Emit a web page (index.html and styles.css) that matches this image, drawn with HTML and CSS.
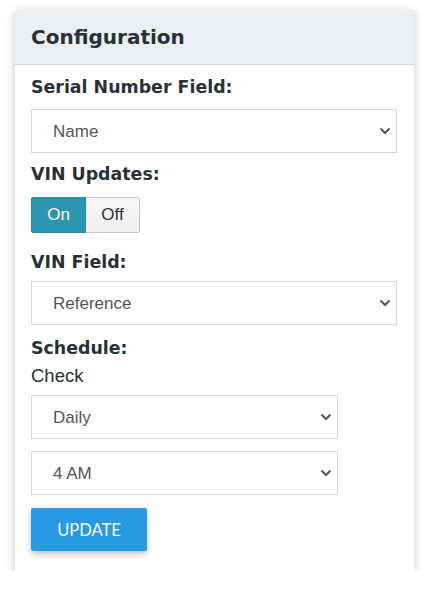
FILE: index.html
```html
<!DOCTYPE html>
<html lang="en">
<head>
    <meta charset="UTF-8">
    <meta name="viewport" content="width=device-width, initial-scale=1.0">
    <title>Configuration</title>
    <link rel="stylesheet" href="styles.css">
</head>
<body>

    <div class="card">
        <div class="card-header">
            <h2>Configuration</h2>
        </div>
        <div class="card-body">
            <label class="field-label">Serial Number Field:</label>
            <select class="field-select">
                <option>Name</option>
            </select>

            <label class="field-label label-vin">VIN Updates:</label>
            <div class="toggle">
                <button class="toggle-btn active">On</button>
                <button class="toggle-btn">Off</button>
            </div>

            <label class="field-label label-vinfield">VIN Field:</label>
            <select class="field-select">
                <option>Reference</option>
            </select>

            <label class="field-label label-schedule">Schedule:</label>
            <p class="check">Check</p>
            <select class="field-select short">
                <option>Daily</option>
            </select>
            <select class="field-select short second">
                <option>4 AM</option>
            </select>

            <button class="update-btn">UPDATE</button>
        </div>
    </div>

</body>
</html>
```

FILE: styles.css
```css
body {
    margin: 0;
    padding: 0;
    background: white;
    font-family: "DejaVu Sans", sans-serif;
}
.card {
    width: 399px;
    margin: 10px 0 0 15px;
    background: white;
    box-shadow: 0 2px 9px rgba(0, 0, 0, 0.22);
}
.card-header {
    background: #eceff1;
    border-bottom: 1px solid #d3d9dd;
    padding: 15px 16px;
}
.card-header h2 {
    margin: 0;
    font-size: 20px;
    line-height: 24px;
    color: #263238;
}
.card-body {
    padding: 11px 16px 20px;
}
.field-label {
    display: block;
    font-size: 17.4px;
    font-weight: bold;
    line-height: 22px;
    color: #263238;
}
.field-select {
    display: block;
    width: 366px;
    height: 44px;
    margin-top: 11px;
    padding: 0 0 0 21px;
    border: 1px solid #cfd8dc;
    border-radius: 0;
    background: white url("data:image/svg+xml;utf8,<svg xmlns='http://www.w3.org/2000/svg' width='12' height='8' viewBox='0 0 12 8'><path d='M1.5 1.5 L6 6 L10.5 1.5' fill='none' stroke='%23555' stroke-width='2'/></svg>") no-repeat right 5px center;
    -webkit-appearance: none;
    appearance: none;
    font-family: "Liberation Sans", Arial, sans-serif;
    font-size: 17px;
    color: #555;
    box-sizing: border-box;
}
.field-select.short {
    width: 307px;
    margin-top: 8px;
}
.field-select.second {
    margin-top: 12px;
}
.label-vin {
    margin-top: 10px;
}
.toggle {
    display: flex;
    margin-top: 12px;
}
.toggle-btn {
    width: 55px;
    height: 36px;
    border: 1px solid #c4c4c4;
    background: linear-gradient(#f8f8f8, #eeeeee);
    font-family: "Liberation Sans", Arial, sans-serif;
    font-size: 17px;
    color: #333;
    padding: 0;
}
.toggle-btn:first-child {
    border-radius: 2px 0 0 2px;
}
.toggle-btn:last-child {
    width: 54px;
    border-left: none;
    border-radius: 0 2px 2px 0;
}
.toggle-btn.active {
    background: #2b95b2;
    border-color: #2787a2;
    color: white;
}
.label-vinfield {
    margin-top: 18px;
}
.label-vinfield + .field-select {
    margin-top: 8px;
}
.label-schedule {
    margin-top: 12px;
}
.check {
    margin: 6px 0 0;
    font-family: "Liberation Sans", Arial, sans-serif;
    font-size: 18.5px;
    line-height: 22px;
    color: #263238;
}
.update-btn {
    display: block;
    margin-top: 13px;
    width: 116px;
    height: 43px;
    border: none;
    border-radius: 2px;
    background: #2899e3;
    color: white;
    font-family: Lato, sans-serif;
    font-size: 16.5px;
    box-shadow: 0 3px 6px rgba(0, 0, 0, 0.25);
}
```
